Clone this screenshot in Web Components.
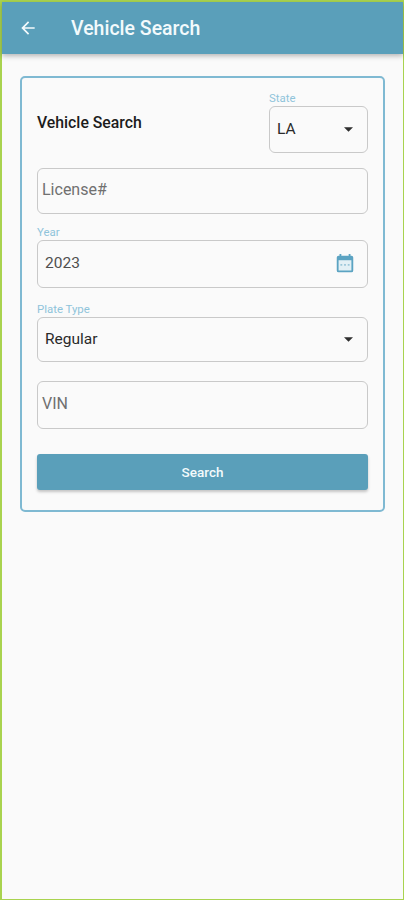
<!DOCTYPE html>
<html lang="en">
<head>
<meta charset="utf-8">
<title>Vehicle Search</title>
<style>
  html, body { margin: 0; height: 100%; }
  body { font-family: Roboto, "Noto Sans", sans-serif; background: #fafafa; }
</style>
</head>
<body>
<search-screen>
  <app-bar>Vehicle Search</app-bar>
  <search-card>
    <div slot="top">Vehicle Search</div>
    <form-field slot="state" label="State" value="LA" arrow box-height="47" pad="7"></form-field>
    <form-field placeholder="License#" box-height="46" style="margin-top:15px"></form-field>
    <form-field label="Year" value="2023" calendar box-height="48" muted style="margin-top:13px"></form-field>
    <form-field label="Plate Type" value="Regular" arrow box-height="45" style="margin-top:16px"></form-field>
    <form-field placeholder="VIN" box-height="48" style="margin-top:19px"></form-field>
    <search-button>Search</search-button>
  </search-card>
</search-screen>

<script>
// search-screen: the whole phone screen with the green edge
class SearchScreen extends HTMLElement {
	constructor() {
		super();
		this.shadow = this.attachShadow({ mode: 'open' });
		this.shadow.innerHTML = `
		<style>
			:host {
				display: block;
				box-sizing: border-box;
				height: 900px;
				background: #fafafa;
				border-style: solid;
				border-color: #a9d34f;
				border-width: 2px 1px 1px 2px;
			}
		</style>
		<slot></slot>`;
	}
}

class AppBar extends HTMLElement {
	constructor() {
		super();
		this.shadow = this.attachShadow({ mode: 'open' });
		this.shadow.innerHTML = `
		<style>
			:host {
				display: flex;
				align-items: center;
				height: 52px;
				padding-left: 16px;
				background: #5a9fba;
				color: #f3fafc;
				font-size: 19.5px;
				font-weight: 500;
				box-shadow: 0 2px 5px rgba(0,0,0,0.28);
				position: relative;
			}
			svg { width: 20px; height: 20px; flex: none; margin-right: 33px; }
		</style>
		<svg viewBox="0 0 24 24" fill="#f3fafc"><path d="M20 11H7.83l5.59-5.59L12 4l-8 8 8 8 1.41-1.41L7.83 13H20v-2z"/></svg>
		<slot></slot>`;
	}
}

class SearchCard extends HTMLElement {
	constructor() {
		super();
		this.shadow = this.attachShadow({ mode: 'open' });
		this.shadow.innerHTML = `
		<style>
			:host {
				display: block;
				box-sizing: border-box;
				width: 365px;
				height: 436px;
				margin: 22px 0 0 18px;
				padding: 15px 15px 0;
				border: 2px solid #7fb9d2;
				border-radius: 5px;
			}
			.top {
				display: flex;
				justify-content: space-between;
				align-items: flex-end;
			}
			.title {
				align-self: center;
				margin-bottom: 2px;
				font-size: 15.8px;
				font-weight: 500;
				color: #1c1c1c;
			}
			.state { display: block; width: 99px; }
			.rest { display: flex; flex-direction: column; }
		</style>
		<div class="top">
			<div class="title"><slot name="top"></slot></div>
			<div class="state"><slot name="state"></slot></div>
		</div>
		<div class="rest"><slot></slot></div>`;
	}
}

// form-field: optional small label above an outlined box
class FormField extends HTMLElement {
	constructor() {
		super();
		this.shadow = this.attachShadow({ mode: 'open' });
	}

	connectedCallback() {
		const label = this.getAttribute('label');
		const value = this.getAttribute('value');
		const placeholder = this.getAttribute('placeholder');
		const boxHeight = this.getAttribute('box-height') || 46;
		const pad = this.getAttribute('pad') || 7;

		let icon = '';
		if (this.hasAttribute('arrow')) {
			icon = `<svg class="arrow" viewBox="0 0 10 5"><path d="M0 0h10L5 5z" fill="#2e2e2e"/></svg>`;
		} else if (this.hasAttribute('calendar')) {
			icon = `<svg class="cal" viewBox="0 0 24 24"><path fill="#e3f0f5" d="M4 8h16v12H4z"/><path fill="#5ba3c2" d="M19 3h-1V1h-2v2H8V1H6v2H5a2 2 0 0 0-2 2v14a2 2 0 0 0 2 2h14a2 2 0 0 0 2-2V5a2 2 0 0 0-2-2zm0 16H5V8h14v11z"/><path fill="#9cc7d9" d="M7 12h2v2H7zm4 0h2v2h-2zm4 0h2v2h-2z"/></svg>`;
		}

		this.shadow.innerHTML = `
		<style>
			:host { display: block; }
			label {
				display: block;
				height: 13px;
				line-height: 11px;
				font-size: 11.4px;
				color: #8fc4da;
			}
			.box {
				box-sizing: border-box;
				display: flex;
				align-items: center;
				justify-content: space-between;
				height: ${boxHeight}px;
				padding: 0 14px 2px ${pad}px;
				border: 1.5px solid #c9c9c9;
				border-radius: 6px;
				font-size: 15.5px;
				color: ${this.hasAttribute('muted') ? '#4f4f4f' : '#2a2a2a'};
			}
			.ph { color: #707070; margin: 0 0 1px -3px; font-size: 16px; }
			.arrow { width: 9px; height: 5px; margin: 2px 0 0 0; }
			.cal { width: 22px; height: 22px; margin: 2px -3px 0 0; }
		</style>
		${label ? `<label>${label}</label>` : ''}
		<div class="box">
			${value ? `<span>${value}</span>` : `<span class="ph">${placeholder}</span>`}
			${icon}
		</div>`;
	}
}

class SearchButton extends HTMLElement {
	constructor() {
		super();
		this.shadow = this.attachShadow({ mode: 'open' });
		this.shadow.innerHTML = `
		<style>
			:host {
				display: flex;
				align-items: center;
				justify-content: center;
				height: 36px;
				margin-top: 25px;
				background: #5a9fba;
				border-radius: 3px;
				color: #f3fafc;
				font-size: 13.5px;
				font-weight: 500;
				box-shadow: 0 2px 3px rgba(0,0,0,0.22);
			}
		</style>
		<slot></slot>`;
	}
}

customElements.define('search-screen', SearchScreen);
customElements.define('app-bar', AppBar);
customElements.define('search-card', SearchCard);
customElements.define('form-field', FormField);
customElements.define('search-button', SearchButton);
</script>
</body>
</html>
